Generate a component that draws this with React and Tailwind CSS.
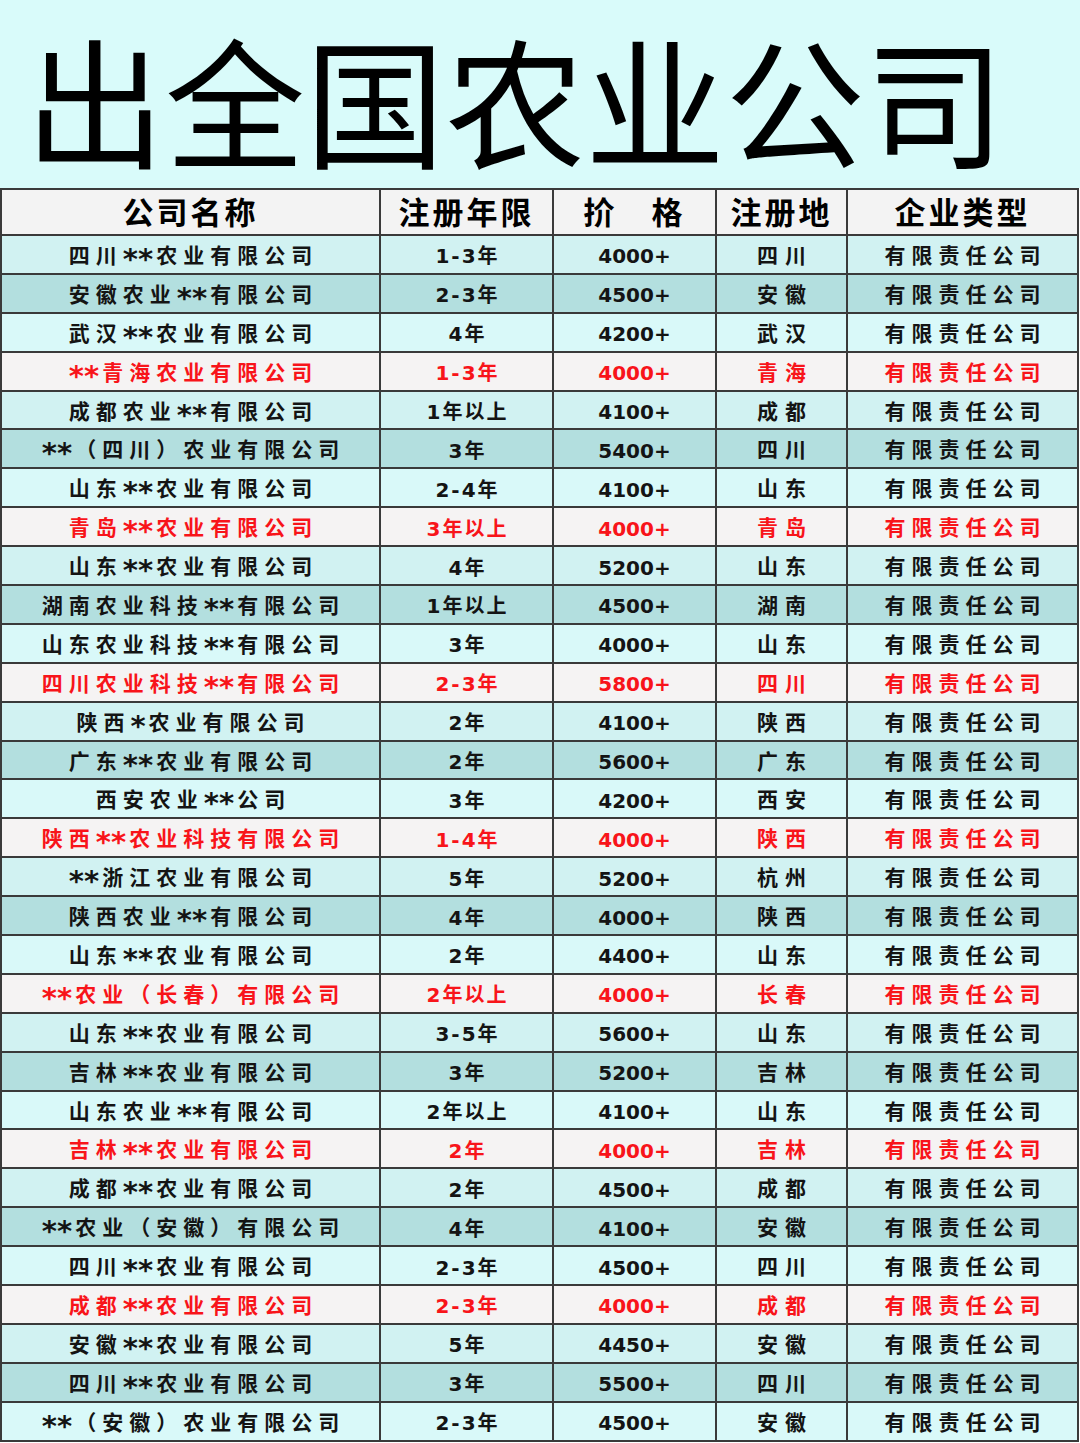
import React from "react";

const rows = [
  ["四川**农业有限公司", "1-3年", "4000+", "四川"],
  ["安徽农业**有限公司", "2-3年", "4500+", "安徽"],
  ["武汉**农业有限公司", "4年", "4200+", "武汉"],
  ["**青海农业有限公司", "1-3年", "4000+", "青海"],
  ["成都农业**有限公司", "1年以上", "4100+", "成都"],
  ["**（四川）农业有限公司", "3年", "5400+", "四川"],
  ["山东**农业有限公司", "2-4年", "4100+", "山东"],
  ["青岛**农业有限公司", "3年以上", "4000+", "青岛"],
  ["山东**农业有限公司", "4年", "5200+", "山东"],
  ["湖南农业科技**有限公司", "1年以上", "4500+", "湖南"],
  ["山东农业科技**有限公司", "3年", "4000+", "山东"],
  ["四川农业科技**有限公司", "2-3年", "5800+", "四川"],
  ["陕西*农业有限公司", "2年", "4100+", "陕西"],
  ["广东**农业有限公司", "2年", "5600+", "广东"],
  ["西安农业**公司", "3年", "4200+", "西安"],
  ["陕西**农业科技有限公司", "1-4年", "4000+", "陕西"],
  ["**浙江农业有限公司", "5年", "5200+", "杭州"],
  ["陕西农业**有限公司", "4年", "4000+", "陕西"],
  ["山东**农业有限公司", "2年", "4400+", "山东"],
  ["**农业（长春）有限公司", "2年以上", "4000+", "长春"],
  ["山东**农业有限公司", "3-5年", "5600+", "山东"],
  ["吉林**农业有限公司", "3年", "5200+", "吉林"],
  ["山东农业**有限公司", "2年以上", "4100+", "山东"],
  ["吉林**农业有限公司", "2年", "4000+", "吉林"],
  ["成都**农业有限公司", "2年", "4500+", "成都"],
  ["**农业（安徽）有限公司", "4年", "4100+", "安徽"],
  ["四川**农业有限公司", "2-3年", "4500+", "四川"],
  ["成都**农业有限公司", "2-3年", "4000+", "成都"],
  ["安徽**农业有限公司", "5年", "4450+", "安徽"],
  ["四川**农业有限公司", "3年", "5500+", "四川"],
  ["**（安徽）农业有限公司", "2-3年", "4500+", "安徽"],
];

// every 4th row is highlighted red on a pale grey ground
const rowBg = ["bg-[#d1f2f2]", "bg-[#b3dfdf]", "bg-[#d9f9f9]", "bg-[#f5f3f3]"];

const cell = "flex items-center justify-center border-r-2 border-b-2 border-[#3a3a3a] whitespace-nowrap leading-none";

// asterisks sit tight together and centred, unlike the spaced-out hanzi
function Name({ text }) {
  return text.split(/(\*+)/).filter(Boolean).map((part, i) =>
    part.startsWith("*") ? (
      <span key={i} className="inline-block translate-y-[3px] tracking-[0px] mr-[3px] text-[29px]">{part}</span>
    ) : (
      <span key={i}>{part}</span>
    )
  );
}

export default function App() {
  return (
    <div
      className="w-[1080px] h-[1443px] overflow-hidden bg-white"
      style={{ fontFamily: '"DejaVu Sans", "Noto Sans CJK SC", sans-serif' }}
    >
      {/* Title */}
      <div className="h-[188px] bg-[#d9fbfa] pl-[25px] pt-[14px]">
        <h1
          className="text-[140px] leading-[166px] font-normal text-black whitespace-nowrap"
          style={{ fontFamily: '"Noto Sans CJK SC", serif' }}
        >
          出全国农业公司
        </h1>
      </div>

      {/* Table */}
      <div className="w-[1079px] border-l-2 border-t-2 border-[#3a3a3a]">
        <div className="grid grid-cols-[379px_173px_163px_131px_231px] h-[46px] bg-[#f3f3f3] text-[31px] font-bold text-black">
          <div className={`${cell} tracking-[3px] pt-[2px]`}>公司名称</div>
          <div className={`${cell} tracking-[3px] pt-[2px]`}>注册年限</div>
          <div className={`${cell} tracking-[3px] pt-[2px]`}>扴　格</div>
          <div className={`${cell} tracking-[3px] pt-[2px]`}>注册地</div>
          <div className={`${cell} tracking-[3px] pt-[2px]`}>企业类型</div>
        </div>

        {rows.map((r, i) => {
          const red = i % 4 === 3;
          return (
            <div
              key={i}
              className={`grid grid-cols-[379px_173px_163px_131px_231px] h-[38.9px] font-bold ${rowBg[i % 4]} ${
                red ? "text-[#f8141a]" : "text-[#141414]"
              }`}
            >
              <div className={`${cell} text-[21px] tracking-[6px] pl-[6px] pt-[4px]`}>
                <Name text={r[0]} />
              </div>
              <div className={`${cell} text-[20px] tracking-[2px] pl-[2px] pt-[4px]`}>{r[1]}</div>
              <div className={`${cell} text-[20px] pt-[4px]`}>{r[2]}</div>
              <div className={`${cell} text-[21px] tracking-[7px] pl-[7px] pt-[4px]`}>{r[3]}</div>
              <div className={`${cell} text-[21px] tracking-[6px] pl-[6px] pt-[4px]`}>有限责任公司</div>
            </div>
          );
        })}
      </div>
    </div>
  );
}
